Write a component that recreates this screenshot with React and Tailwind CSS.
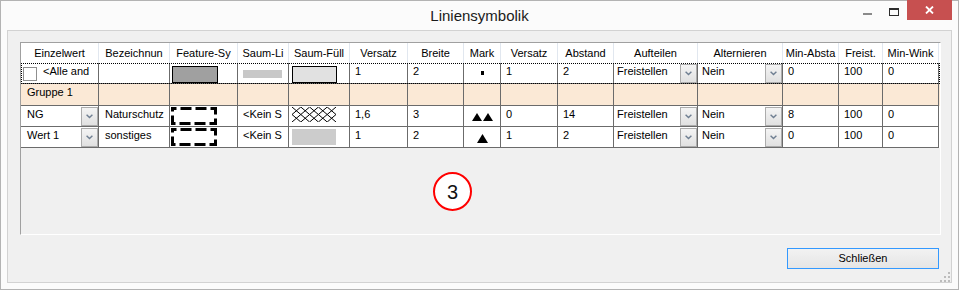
import React from 'react';

const cols =
  'grid grid-cols-[78px_71px_68px_51px_61px_58px_56px_37px_57px_56px_84px_85px_56px_44px_56px]';

const headers = [
  'Einzelwert', 'Bezeichnun', 'Feature-Sy', 'Saum-Li', 'Saum-Füll', 'Versatz', 'Breite', 'Mark',
  'Versatz', 'Abstand', 'Aufteilen', 'Alternieren', 'Min-Absta', 'Freist.', 'Min-Wink',
];

function Cell({ children, className = '' }) {
  return (
    <div className={`border-r border-b border-[#6b6b6b] overflow-hidden whitespace-nowrap ${className}`}>
      {children}
    </div>
  );
}

function Txt({ children, className = '' }) {
  return <div className={`pl-[5px] pt-[2px] leading-[13px] ${className}`}>{children}</div>;
}

function DropButton() {
  return (
    <div className="w-[17px] h-[19px] mt-px shrink-0 border border-[#acacac] bg-linear-to-b from-[#f4f4f4] to-[#e1e1e1] flex items-center justify-center">
      <svg width="7" height="5" viewBox="0 0 7 5">
        <polyline points="0.6,0.8 3.5,3.6 6.4,0.8" fill="none" stroke="#6f7f92" strokeWidth="1.4" />
      </svg>
    </div>
  );
}

function DropCell({ text, pad = 'pl-[4px]' }) {
  return (
    <Cell className="flex">
      <div className={`flex-1 pt-[2px] leading-[13px] overflow-hidden ${pad}`}>{text}</div>
      <DropButton />
    </Cell>
  );
}

function DashedBox() {
  return (
    <svg width="46" height="18" viewBox="0 0 46 18" className="ml-px mt-px">
      <rect
        x="1.5"
        y="1.5"
        width="43"
        height="15"
        fill="none"
        stroke="#000"
        strokeWidth="3"
        strokeDasharray="11 4"
        strokeDashoffset="7"
      />
    </svg>
  );
}

function Hatch() {
  const lines = [];
  for (let i = 0; i < 5; i++) {
    for (let j = 0; j < 2; j++) {
      const x = i * 8.8;
      const y = j * 7.5;
      lines.push(<line key={`a${i}${j}`} x1={x} y1={y} x2={x + 8.8} y2={y + 7.5} stroke="#000" strokeWidth="1" />);
      lines.push(<line key={`b${i}${j}`} x1={x + 8.8} y1={y} x2={x} y2={y + 7.5} stroke="#000" strokeWidth="1" />);
    }
  }
  return (
    <svg width="44" height="15" viewBox="0 0 44 15" className="ml-[3px] mt-px">
      {lines}
    </svg>
  );
}

function Triangle({ w = 10, h = 8 }) {
  return (
    <svg width={w} height={h} viewBox={`0 0 ${w} ${h}`}>
      <polygon points={`${w / 2},0 ${w},${h} 0,${h}`} fill="#000" />
    </svg>
  );
}

function TitleBar() {
  return (
    <div className="grid grid-cols-[1fr_auto_1fr] h-[29px] shrink-0">
      <div />
      <div className="text-[15px] leading-[20px] pt-[5px] text-[#1a1a1a]">Liniensymbolik</div>
      <div className="flex justify-end items-start pr-[6px]">
        <div className="w-[26px] h-[20px] flex items-center justify-center pt-[5px]">
          <div className="w-[9px] h-[2px] bg-[#8a8a8a]" />
        </div>
        <div className="w-[27px] h-[20px] flex items-center justify-center pt-px">
          <div className="w-[10px] h-[8px] border border-t-2 border-[#2b2b2b]" />
        </div>
        <div className="w-[45px] h-[20px] -mt-px bg-[#c75050] flex items-center justify-center">
          <svg width="9" height="8" viewBox="0 0 9 8">
            <path d="M1 0.5 L8 7.5 M8 0.5 L1 7.5" stroke="#fff" strokeWidth="1.8" />
          </svg>
        </div>
      </div>
    </div>
  );
}

export default function App() {
  return (
    <div className="w-[959px] h-[290px] border border-[#b3b3b3] bg-[#fbfbfb] flex flex-col font-['Liberation_Sans',Arial,sans-serif] text-black text-[11px]">
      <TitleBar />
      <div className="relative flex-1 mx-[6px] mb-[6px] border border-[#d2d2d2] bg-[#f0f0f0] flex flex-col">
        <div className="pl-[12px] pt-[11px]">
          <div className="relative w-[921px] h-[193px] border border-l-[#a0a0a0] border-t-[#a0a0a0] border-r-white border-b-white bg-[#f0f0f0]">
            {/* header */}
            <div className={`${cols} h-[20px] bg-white`}>
              {headers.map((h, i) => (
                <div
                  key={i}
                  className="flex items-center justify-center border-r border-[#e1e7ef] whitespace-nowrap overflow-hidden leading-[13px]"
                >
                  {h}
                </div>
              ))}
            </div>

            {/* row 1 - all */}
            <div className={`${cols} h-[21px] bg-white outline-1 outline-dotted outline-black -outline-offset-1`}>
              <Cell className="flex items-start">
                <div className="w-[14px] h-[14px] ml-[2px] mt-[4px] bg-white border border-[#8f8f8f] shrink-0" />
                <div className="pl-[6px] pt-[2px] leading-[13px]">&lt;Alle and</div>
              </Cell>
              <Cell />
              <Cell>
                <div className="w-[46px] h-[17px] ml-[2px] mt-[3px] bg-[#a0a0a0] border border-black" />
              </Cell>
              <Cell>
                <div className="w-[39px] h-[8px] ml-[5px] mt-[7px] bg-[#c8c8c8]" />
              </Cell>
              <Cell>
                <div className="w-[45px] h-[17px] ml-[3px] mt-[3px] bg-[#e1e1e1] border border-black" />
              </Cell>
              <Cell><Txt>1</Txt></Cell>
              <Cell><Txt>2</Txt></Cell>
              <Cell className="flex items-center justify-center">
                <div className="w-[3px] h-[4px] bg-black ml-px" />
              </Cell>
              <Cell><Txt>1</Txt></Cell>
              <Cell><Txt>2</Txt></Cell>
              <DropCell text="Freistellen" pad="pl-[3px]" />
              <DropCell text="Nein" pad="pl-[4px]" />
              <Cell><Txt>0</Txt></Cell>
              <Cell><Txt>100</Txt></Cell>
              <Cell><Txt>0</Txt></Cell>
            </div>

            {/* group row */}
            <div className={`${cols} h-[22px] bg-[#fbe9d6]`}>
              <Cell><Txt className="pl-[6px]">Gruppe 1</Txt></Cell>
              {Array.from({ length: 14 }).map((_, i) => (
                <Cell key={i} />
              ))}
            </div>

            {/* NG */}
            <div className={`${cols} h-[21px] bg-white`}>
              <DropCell text="NG" pad="pl-[6px]" />
              <Cell><Txt className="pl-[6px]">Naturschutz</Txt></Cell>
              <Cell><DashedBox /></Cell>
              <Cell><Txt>&lt;Kein S</Txt></Cell>
              <Cell><Hatch /></Cell>
              <Cell><Txt>1,6</Txt></Cell>
              <Cell><Txt>3</Txt></Cell>
              <Cell className="flex items-center justify-center gap-px pt-px">
                <Triangle />
                <Triangle />
              </Cell>
              <Cell><Txt>0</Txt></Cell>
              <Cell><Txt>14</Txt></Cell>
              <DropCell text="Freistellen" pad="pl-[3px]" />
              <DropCell text="Nein" pad="pl-[4px]" />
              <Cell><Txt>8</Txt></Cell>
              <Cell><Txt>100</Txt></Cell>
              <Cell><Txt>0</Txt></Cell>
            </div>

            {/* Wert 1 */}
            <div className={`${cols} h-[21px] bg-white`}>
              <DropCell text="Wert 1" pad="pl-[6px]" />
              <Cell><Txt className="pl-[6px]">sonstiges</Txt></Cell>
              <Cell><DashedBox /></Cell>
              <Cell><Txt>&lt;Kein S</Txt></Cell>
              <Cell>
                <div className="w-[44px] h-[16px] ml-[3px] mt-[2px] bg-[#cccccc]" />
              </Cell>
              <Cell><Txt>1</Txt></Cell>
              <Cell><Txt>2</Txt></Cell>
              <Cell className="flex items-center justify-center pt-[2px]">
                <Triangle w={11} h={9} />
              </Cell>
              <Cell><Txt>1</Txt></Cell>
              <Cell><Txt>2</Txt></Cell>
              <DropCell text="Freistellen" pad="pl-[3px]" />
              <DropCell text="Nein" pad="pl-[4px]" />
              <Cell><Txt>0</Txt></Cell>
              <Cell><Txt>100</Txt></Cell>
              <Cell><Txt>0</Txt></Cell>
            </div>

            {/* annotation marker */}
            <div className="absolute left-[412px] top-[129px] w-[39px] h-[39px] rounded-full border-2 border-[#ff0000] bg-white flex items-center justify-center text-[20px] leading-none text-[#111]">
              3
            </div>
          </div>
        </div>

        <div className="mt-[13px] flex justify-end pr-[12px]">
          <button className="w-[152px] h-[21px] border border-[#3399ff] bg-linear-to-b from-[#f2f2f2] to-[#e5e5e5] text-[11px] leading-[13px] text-black">
            Schließen
          </button>
        </div>

        <svg width="10" height="10" viewBox="0 0 10 10" className="absolute right-[1px] bottom-0">
          <rect x="8" y="0" width="2" height="2" fill="#bcbcbc" />
          <rect x="4" y="4" width="2" height="2" fill="#bcbcbc" />
          <rect x="8" y="4" width="2" height="2" fill="#bcbcbc" />
          <rect x="0" y="8" width="2" height="2" fill="#bcbcbc" />
          <rect x="4" y="8" width="2" height="2" fill="#bcbcbc" />
          <rect x="8" y="8" width="2" height="2" fill="#bcbcbc" />
        </svg>
      </div>
    </div>
  );
}
